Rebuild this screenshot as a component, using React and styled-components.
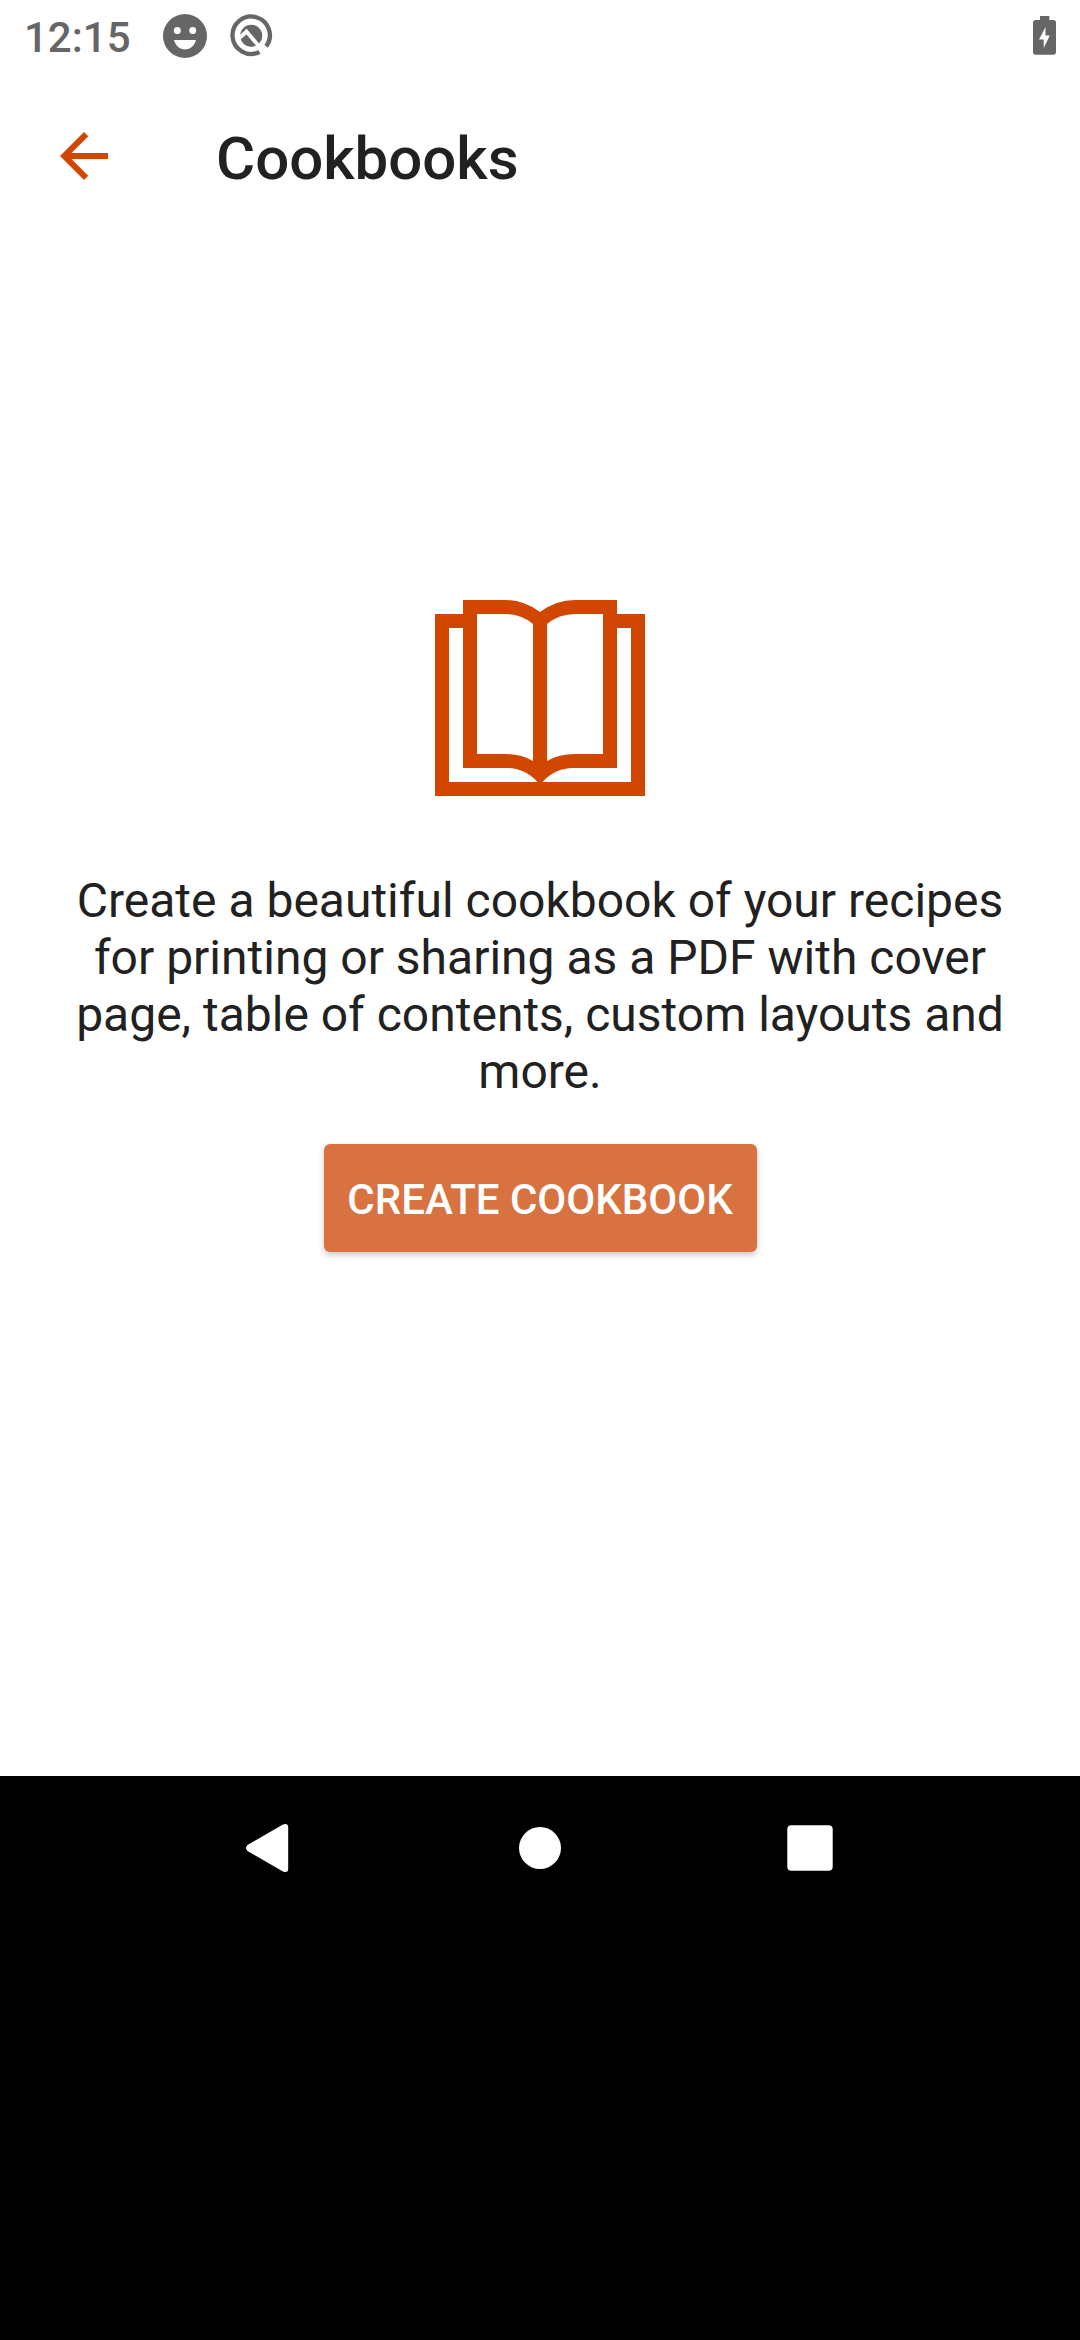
import React from "react";
import styled, { createGlobalStyle } from "styled-components";

const GlobalStyle = createGlobalStyle`
  html, body { margin: 0; padding: 0; background: #000; }
  * { box-sizing: border-box; }
`;

const Screen = styled.div`
  display: flex;
  flex-direction: column;
  width: 1080px;
  height: 2340px;
  overflow: hidden;
  background: #000;
  font-family: Roboto, "Liberation Sans", sans-serif;
  color: #212121;
`;

const Page = styled.div`
  display: flex;
  flex-direction: column;
  height: 1776px;
  background: #fff;
`;

const StatusBar = styled.header`
  display: flex;
  align-items: center;
  height: 72px;
  padding: 0 24px;
  color: #666;
`;

const Clock = styled.span`
  width: 139px;
  padding-top: 4px;
  font-size: 42px;
  font-weight: 500;
  line-height: 50px;
`;

const Notifications = styled.div`
  display: flex;
  flex: 1;
  gap: 23px;
`;

const Icon = styled.svg`
  display: block;
  flex: none;
  width: ${(p) => p.$w}px;
  height: ${(p) => p.$h || p.$w}px;
`;

const Toolbar = styled.div`
  display: flex;
  align-items: center;
  height: 168px;
  padding-left: 48px;
  color: #d14600;
`;

const BackButton = styled.button`
  display: flex;
  width: 168px;
  padding: 0;
  border: 0;
  background: none;
  color: inherit;
`;

const Title = styled.h1`
  margin: 0;
  padding-top: 6px;
  font-size: 60px;
  font-weight: 500;
  line-height: 70px;
  color: #212121;
`;

const EmptyState = styled.main`
  display: flex;
  flex: 1;
  flex-direction: column;
  align-items: center;
  padding: 360px 48px 0;
`;

const Message = styled.p`
  margin: 76px 0 0;
  font-size: 48px;
  line-height: 57px;
  text-align: center;
`;

const CreateButton = styled.button`
  width: 433px;
  height: 108px;
  margin-top: 44px;
  padding: 4px 0 0;
  border: 0;
  border-radius: 6px;
  background: #d87341;
  box-shadow: 0 3px 6px rgba(0, 0, 0, 0.22);
  color: #fff;
  font: 500 42px/50px Roboto, "Liberation Sans", sans-serif;
  white-space: nowrap;
`;

const NavBar = styled.nav`
  display: flex;
  justify-content: center;
  align-items: center;
  gap: 198px;
  height: 144px;
  color: #fff;
`;

export default function App() {
  return (
    <>
      <GlobalStyle />
      <Screen>
        <Page>
          <StatusBar>
            <Clock>12:15</Clock>
            <Notifications>
              <Icon $w={44} viewBox="0 0 44 44" fill="currentColor">
                <path
                  fillRule="evenodd"
                  d="M22 0a22 22 0 1 0 0 44a22 22 0 1 0 0-44ZM14.3 13a3.5 3.5 0 1 1 0 7a3.5 3.5 0 1 1 0-7ZM29.7 13a3.5 3.5 0 1 1 0 7a3.5 3.5 0 1 1 0-7ZM11 26H33C31.500 31.500 27.500 35.500 22 35.500S12.500 31.500 11 26Z"
                />
              </Icon>
              <Icon $w={44} viewBox="0 0 44 44" fill="none" stroke="currentColor">
                <path d="M29.500 38A18.700 18.700 0 1 1 36.200 32.400" strokeWidth="4.300" />
                <circle cx="21.200" cy="21.700" r="11" fill="currentColor" stroke="none" />
                <path d="M9 24.500L16.500 17.500L33 37" stroke="#fff" strokeWidth="3.800" />
              </Icon>
            </Notifications>
            <Icon $w={23} $h={40} viewBox="0 0 23 40" fill="currentColor">
              <path fillRule="evenodd" d="M7 0H16.300V4H20.300Q23 4 23 6.700V36Q23 38.700 20.300 38.700H2.700Q0 38.700 0 36V6.700Q0 4 2.700 4H7ZM12.500 11L6 23.500H10.700V32L16.800 19.500H12.500Z" />
            </Icon>
          </StatusBar>
          <Toolbar>
            <BackButton aria-label="Back">
              <Icon $w={72} viewBox="0 0 24 24" fill="currentColor">
                <path d="M20 11H7.830L13.420 5.410L12 4L4 12L12 20L13.410 18.590L7.830 13H20Z" />
              </Icon>
            </BackButton>
            <Title>Cookbooks</Title>
          </Toolbar>
          <EmptyState>
            <Icon $w={210} $h={196} viewBox="0 0 210 196" fill="#d14600">
              <path
                fillRule="evenodd"
                d="M0 14H28V0H70Q89 0 105 12Q121 0 140 0H182V14H210V196H0ZM14 28V182H102.500Q90 168 72 168H28V28ZM182 28V168H138Q120 168 107.500 182H196V28ZM42 14V154H70Q86 154 98 161V24Q86 14 70 14ZM168 14H140Q124 14 112 24V161Q124 154 140 154H168Z"
              />
            </Icon>
            <Message>
              Create a beautiful cookbook of your recipes<br />
              for printing or sharing as a PDF with cover<br />
              page, table of contents, custom layouts and<br />
              more.
            </Message>
            <CreateButton>CREATE COOKBOOK</CreateButton>
          </EmptyState>
        </Page>
        <NavBar>
          <Icon $w={72} viewBox="0 0 72 72" fill="currentColor">
            <path d="M13.500 33L49 12.600Q54.200 10.500 54.200 15.500V56.500Q54.200 61.500 49 59.400L13.500 39Q10.500 36 13.500 33Z" />
          </Icon>
          <Icon $w={72} viewBox="0 0 72 72" fill="currentColor">
            <circle cx="36" cy="36" r="21" />
          </Icon>
          <Icon $w={72} viewBox="0 0 72 72" fill="currentColor">
            <rect x="13.300" y="13.300" width="45.400" height="45.400" rx="4" />
          </Icon>
        </NavBar>
      </Screen>
    </>
  );
}
